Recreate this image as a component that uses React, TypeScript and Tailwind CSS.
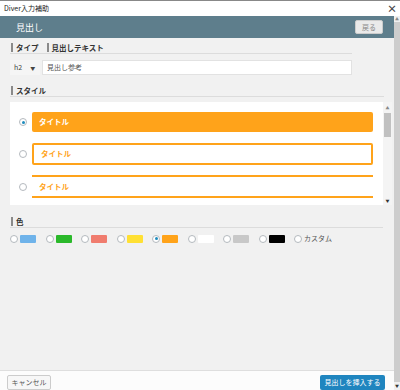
const font = { fontFamily: '"Noto Sans CJK JP", "Noto Sans", sans-serif' };

const Label = ({ children }: { children: React.ReactNode }) => (
  <span className="flex h-[9px] items-center border-l-2 border-[#8a8a8a] pl-[3px] text-[7.5px] font-bold leading-none text-[#333]">
    {children}
  </span>
);

const Radio = ({ checked }: { checked?: boolean }) => (
  <span className="flex h-[8px] w-[8px] shrink-0 items-center justify-center rounded-full border border-[#b4b9be] bg-white">
    {checked && <span className="h-[3px] w-[3px] rounded-full bg-[#1e8cbe]" />}
  </span>
);

const colors = ['#6fb3ea', '#2bb92b', '#f07c6e', '#ffe033', '#ffa31a', '#ffffff', '#c8c8c8', '#000000'];

const App = () => {
  return (
    <div className="flex h-[390px] w-[400px] flex-col overflow-hidden bg-white text-[8px] leading-none" style={font}>
      {/* window title */}
      <div className="flex h-[16px] shrink-0 items-center justify-between border-t border-[#888] bg-white pl-[4px] pr-[3px]">
        <span className="text-[7px] text-[#222]">Diver入力補助</span>
        <span className="text-[10px] font-bold text-[#444]">×</span>
      </div>

      <div className="flex min-h-0 flex-1">
        <div className="flex w-[394px] flex-col">
          {/* header */}
          <div className="flex h-[22px] shrink-0 items-center justify-between bg-[#5e7e8c] pl-[16px] pr-[11px]">
            <span className="text-[9px] text-white">見出し</span>
            <span className="flex h-[14px] w-[28px] items-center justify-center rounded-[2px] border border-[#ccc] bg-[#eaeaea] text-[7px] text-[#888]">
              戻る
            </span>
          </div>

          {/* content */}
          <div className="flex flex-1 flex-col bg-[#f1f1f1] px-[10px]">
            <div className="mt-[5px] flex h-[11px] w-[342px] items-start gap-[8px] border-b border-[#dcdcdc] pl-[1px]">
              <Label>タイプ</Label>
              <Label>見出しテキスト</Label>
            </div>
            <div className="mt-[6px] flex h-[15px] w-[342px] gap-[2px]">
              <div className="flex w-[30px] items-center gap-[8px] bg-[#f5f5f5] pl-[4px] text-[7px] text-[#444]">
                h2 <span className="text-[5px]">▼</span>
              </div>
              <div className="flex flex-1 items-center border border-[#e2e2e2] bg-white pl-[4px] text-[7px] text-[#555]">
                見出し参考
              </div>
            </div>

            <div className="mt-[10px] flex h-[12px] items-start border-b border-[#dcdcdc] pl-[1px] pt-[1px]">
              <Label>スタイル</Label>
            </div>

            <div className="mt-[5px] flex h-[103px] w-[382px]">
              <div className="flex w-[373px] flex-col bg-white pl-[9px] pr-[10px] pt-[10px]">
                <div className="flex items-center gap-[5px]">
                  <Radio checked />
                  <div className="flex h-[20px] flex-1 items-center rounded-[2px] bg-[#ffa31a] pl-[7px] text-[7.5px] font-bold text-white">
                    タイトル
                  </div>
                </div>
                <div className="mt-[11px] flex items-center gap-[5px]">
                  <Radio />
                  <div className="flex h-[22px] flex-1 items-center rounded-[2px] border-2 border-[#ffa31a] pl-[7px] text-[7.5px] font-bold text-[#ffa31a]">
                    タイトル
                  </div>
                </div>
                <div className="mt-[10px] flex items-center gap-[5px]">
                  <Radio />
                  <div className="flex h-[23px] flex-1 items-center border-y-2 border-[#ffa31a] pl-[7px] text-[7.5px] font-bold text-[#ffa31a]">
                    タイトル
                  </div>
                </div>
              </div>
              <div className="flex w-[9px] flex-col items-center bg-[#f4f4f4] pt-[3px]">
                <span className="text-[4px] leading-[6px] text-[#888]">▲</span>
                <div className="mt-[2px] h-[24px] w-[7px] bg-[#c1c1c1]" />
                <div className="flex-1" />
                <span className="pb-[1px] text-[4px] leading-[6px] text-[#333]">▼</span>
              </div>
            </div>

            <div className="mt-[11px] flex h-[12px] w-[373px] items-start border-b border-[#dcdcdc] pl-[1px] pt-[1px]">
              <Label>色</Label>
            </div>
            <div className="mt-[6px] flex h-[9px] items-center">
              {colors.map((c, i) => (
                <div key={c} className="flex w-[35.5px] items-center gap-[2px]">
                  <Radio checked={i === 4} />
                  <span className="h-[8px] w-[16px] rounded-[1px]" style={{ background: c }} />
                </div>
              ))}
              <div className="flex items-center gap-[2px]">
                <Radio />
                <span className="text-[7px] text-[#555]">カスタム</span>
              </div>
            </div>
          </div>

          {/* footer */}
          <div className="flex h-[20px] shrink-0 items-center justify-between border-t border-[#dedede] bg-[#fcfcfc] pl-[7px] pr-[9px] pt-[3px]">
            <span className="flex h-[15px] w-[44px] items-center justify-center rounded-[2px] border border-[#ccc] bg-[#f7f7f7] text-[7px] text-[#555]">
              キャンセル
            </span>
            <span className="flex h-[15px] w-[65px] items-center justify-center rounded-[2px] bg-[#1f85bf] text-[7px] text-white">
              見出しを挿入する
            </span>
          </div>
        </div>

        {/* outer scrollbar */}
        <div className="flex w-[6px] flex-col items-center bg-[#f0f0f0]">
          <span className="text-[4px] leading-[6px] text-[#888]">▲</span>
          <div className="w-[6px] flex-1 bg-[#cdcdcd]" />
          <span className="text-[4px] leading-[8px] text-[#333]">▼</span>
        </div>
      </div>
    </div>
  );
};

export default App;
